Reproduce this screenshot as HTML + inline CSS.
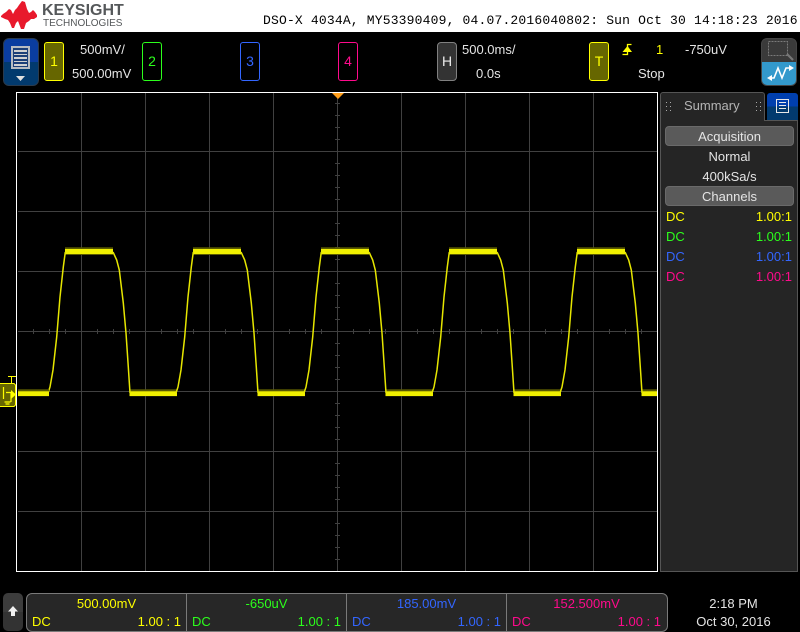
<!DOCTYPE html>
<html><head><meta charset="utf-8">
<style>
html,body{margin:0;padding:0;background:#000;}
#p{position:relative;width:800px;height:632px;overflow:hidden;background:#000;font-family:"Liberation Sans",sans-serif;font-size:13px;color:#e4e4e4;}
.t{position:absolute;white-space:nowrap;line-height:16px;}
.c{text-align:center;}
.r{text-align:right;}
.b{position:absolute;box-sizing:border-box;}
.n{font-size:14px;}
.y{color:#ffff00}.g{color:#2cff1c}.u{color:#3366ff}.k{color:#ff0a8c}
svg{position:absolute;left:0;top:0;}
</style></head><body>
<div id="p">
<div class="b" style="left:0;top:0;width:800px;height:32px;background:#fff;"></div>
<svg width="40" height="32" viewBox="0 0 40 32"><path d="M1 16L3 14L6 12L9 9L11 10L13 14L15 10L17 8L19 5L22 1L25 2L27 9L29 13L31 12L33 10L35 12L37 15L37 17L34 19L31 19L29 21L26 23L24 29L21 29L18 21L16 23L14 28L12 28L10 23L8 20L5 19L3 18L1 17Z" fill="#e8192c"/></svg>
<div class="t" style="left:42px;top:-3px;font-size:16px;line-height:24px;font-weight:bold;color:#55585a;transform:translateY(2px);">KEYSIGHT</div>
<div class="t" style="left:43px;top:15px;font-size:10px;line-height:14px;color:#55585a;transform:translateY(2px);">TECHNOLOGIES</div>
<div class="t" style="left:263px;top:13px;font-family:'Liberation Mono',monospace;font-size:13px;color:#000;letter-spacing:.18px;">DSO-X 4034A, MY53390409, 04.07.2016040802: Sun Oct 30 14:18:23 2016</div>

<div class="b" style="left:3px;top:38px;width:36px;height:48px;border-radius:6px;background:linear-gradient(#0a3da0 0,#0a3da0 50%,#023a6e 50%,#023a6e 100%);border:1px solid #2a3a4c;"></div>
<div class="b" style="left:11px;top:46px;width:19px;height:23px;background:#1c3f78;border:2px solid #b8bcc2;"></div>
<div class="b" style="left:14px;top:50px;width:13px;height:2px;background:#d0d0d0;"></div>
<div class="b" style="left:14px;top:54px;width:13px;height:1px;background:#d0d0d0;"></div>
<div class="b" style="left:14px;top:57px;width:13px;height:2px;background:#d0d0d0;"></div>
<div class="b" style="left:14px;top:61px;width:13px;height:1px;background:#d0d0d0;"></div>
<div class="b" style="left:14px;top:64px;width:13px;height:2px;background:#d0d0d0;"></div>
<svg width="40" height="90"><path d="M16 76H25L20.500 81Z" fill="#e0e0e0"/></svg>

<div class="b c y n" style="left:44px;top:42px;width:20px;height:39px;background:#666600;border:1px solid #ffff00;border-radius:3px;line-height:37px;">1</div>
<div class="b c g n" style="left:142px;top:42px;width:20px;height:39px;border:1px solid #2cff1c;border-radius:3px;line-height:37px;">2</div>
<div class="b c u n" style="left:240px;top:42px;width:20px;height:39px;border:1px solid #3366ff;border-radius:3px;line-height:37px;">3</div>
<div class="b c k n" style="left:338px;top:42px;width:20px;height:39px;border:1px solid #ff0a8c;border-radius:3px;line-height:37px;">4</div>
<div class="b c n" style="left:437px;top:42px;width:20px;height:39px;background:#333;border:1px solid #808080;border-radius:4px;line-height:37px;color:#eee;">H</div>
<div class="b c y n" style="left:589px;top:42px;width:20px;height:39px;background:#666600;border:1px solid #ffff00;border-radius:3px;line-height:37px;">T</div>

<div class="t" style="left:80px;top:42px;">500mV/</div>
<div class="t" style="left:72px;top:66px;">500.00mV</div>
<div class="t" style="left:462px;top:42px;">500.0ms/</div>
<div class="t" style="left:476px;top:66px;">0.0s</div>
<div class="t y" style="left:656px;top:42px;">1</div>
<div class="t" style="left:685px;top:42px;">-750uV</div>
<div class="t" style="left:638px;top:66px;">Stop</div>
<svg width="800" height="90"><path d="M622.500 54.500H627.500V44.500H631.500" fill="none" stroke="#ffff00" stroke-width="1.300"/><path d="M622.500 52L627.500 46L632 52Z" fill="#ffff00"/></svg>

<div class="b" style="left:761px;top:38px;width:36px;height:48px;border-radius:6px;background:linear-gradient(#3a3a3a 0,#3a3a3a 50%,#3399cc 50%,#3399cc 100%);border:1px solid #444;"></div>
<svg width="800" height="90" style="shape-rendering:crispEdges"><rect x="768.500" y="41.500" width="19" height="14" fill="none" stroke="#7a7a7a" stroke-dasharray="2 1"/></svg>
<svg width="800" height="90"><path d="M787 54L793 60" stroke="#777" stroke-width="2.200"/><path d="M770 78H774L778 68L782 78L786 68H790" fill="none" stroke="#fff" stroke-width="1.600"/><path d="M789 65L794 68L789 71Z" fill="#fff"/><path d="M772 75L767 78L772 81Z" fill="#fff"/></svg>

<!-- scope grid -->
<svg width="800" height="632" style="shape-rendering:crispEdges">
<g stroke="#404040" fill="none">
<path d="M81.500 93V571M145.500 93V571M209.500 93V571M273.500 93V571M337.500 93V571M401.500 93V571M465.500 93V571M529.500 93V571M593.500 93V571"/>
<path d="M18 151.500H657M18 211.500H657M18 271.500H657M18 331.500H657M18 391.500H657M18 451.500H657M18 511.500H657"/>
<path d="M33.500 329V334M49.500 329V334M65.500 329V334M97.500 329V334M113.500 329V334M129.500 329V334M161.500 329V334M177.500 329V334M193.500 329V334M225.500 329V334M241.500 329V334M257.500 329V334M289.500 329V334M305.500 329V334M321.500 329V334M353.500 329V334M369.500 329V334M385.500 329V334M417.500 329V334M433.500 329V334M449.500 329V334M481.500 329V334M497.500 329V334M513.500 329V334M545.500 329V334M561.500 329V334M577.500 329V334M609.500 329V334M625.500 329V334M641.500 329V334"/>
<path d="M335 103.500H340M335 115.500H340M335 127.500H340M335 139.500H340M335 163.500H340M335 175.500H340M335 187.500H340M335 199.500H340M335 223.500H340M335 235.500H340M335 247.500H340M335 259.500H340M335 283.500H340M335 295.500H340M335 307.500H340M335 319.500H340M335 343.500H340M335 355.500H340M335 367.500H340M335 379.500H340M335 403.500H340M335 415.500H340M335 427.500H340M335 439.500H340M335 463.500H340M335 475.500H340M335 487.500H340M335 499.500H340M335 523.500H340M335 535.500H340M335 547.500H340M335 559.500H340"/>
</g>
<rect x="16.500" y="92.500" width="641" height="479" fill="none" stroke="#fff" stroke-width="1.300"/>
</svg>

<!-- waveform -->
<svg width="800" height="632">
<defs>
<clipPath id="cp"><rect x="18" y="93" width="639" height="478"/></clipPath>
<g id="w">
<rect x="65" y="247.300" width="48" height="7.700" fill="#5a5a00"/>
<rect x="65" y="249" width="48" height="5" fill="#f0f000"/>
<rect x="129.500" y="389.300" width="47.500" height="7" fill="#5a5a00"/>
<rect x="129.500" y="391.300" width="47.500" height="4.700" fill="#f0f000"/>
<path d="M48 393L50 387L53 370L56.700 337L60 297L63.300 267L65.300 252M113 252L116.700 260L119.300 270L123.300 303L126 333L128.300 367L130 393" fill="none" stroke="#e6e600" stroke-width="1.500"/>
</g></defs>
<g clip-path="url(#cp)">
<use href="#w"/><use href="#w" x="128"/><use href="#w" x="256"/><use href="#w" x="384"/><use href="#w" x="512"/>
<rect x="18" y="389.300" width="31" height="7" fill="#5a5a00"/>
<rect x="18" y="391.300" width="31" height="4.700" fill="#f0f000"/>
</g>
<path d="M332 93H344L338 99Z" fill="#ff9e1a"/>
<path d="M8 376.500H16M11.500 376V383" stroke="#ffff00" fill="none"/>
<path d="M-1 383.500H14L15.500 385V405L14 406.500H-1Z" fill="#666600" stroke="#ffff00" stroke-width="1"/>
<path d="M3.500 387V399M6 392.500H11V402M4.500 402H10.500M5.500 404H9.500" stroke="#ffff00" stroke-width="1.200" fill="none"/>
<path d="M11 390L16 394.500L11 399Z" fill="#ffff00"/>
</svg>

<!-- side panel -->
<div class="b" style="left:660px;top:92px;width:105px;height:30px;background:#252525;border:1px solid #555;border-bottom:none;border-radius:3px 3px 0 0;"></div>
<div class="b" style="left:660px;top:120px;width:138px;height:452px;background:#252525;border:1px solid #555;"></div>
<div class="b" style="left:661px;top:119px;width:103px;height:4px;background:#252525;"></div>
<div class="b" style="left:767px;top:93px;width:31px;height:27px;border-radius:3px 3px 0 0;background:linear-gradient(#003fae 0,#003fae 50%,#023a6e 50%,#023a6e 100%);"></div>
<div class="b" style="left:776px;top:99px;width:13px;height:14px;border:1px solid #e8e8e8;"></div>
<div class="b" style="left:779px;top:102px;width:7px;height:1px;background:#e8e8e8;"></div>
<div class="b" style="left:779px;top:105px;width:7px;height:1px;background:#e8e8e8;"></div>
<div class="b" style="left:779px;top:108px;width:7px;height:1px;background:#e8e8e8;"></div>
<svg width="800" height="130" style="shape-rendering:crispEdges"><path d="M666 102.500h1M670 102.500h1M666 106.500h1M670 106.500h1M666 110.500h1M670 110.500h1M756 102.500h1M760 102.500h1M756 106.500h1M760 106.500h1M756 110.500h1M760 110.500h1" stroke="#aaa"/></svg>
<div class="t" style="left:684px;top:98px;color:#b4b4b4;">Summary</div>

<div class="b c" style="left:665px;top:126px;width:129px;height:20px;background:#5a5a5a;border:1px solid #6a6a6a;border-radius:4px;line-height:19px;">Acquisition</div>
<div class="t c" style="left:665px;top:149px;width:129px;">Normal</div>
<div class="t c" style="left:665px;top:169px;width:129px;">400kSa/s</div>
<div class="b c" style="left:665px;top:186px;width:129px;height:20px;background:#5a5a5a;border:1px solid #6a6a6a;border-radius:4px;line-height:19px;">Channels</div>
<div class="t y" style="left:666px;top:209px;">DC</div><div class="t r y" style="left:732px;top:209px;width:60px;">1.00:1</div>
<div class="t g" style="left:666px;top:229px;">DC</div><div class="t r g" style="left:732px;top:229px;width:60px;">1.00:1</div>
<div class="t u" style="left:666px;top:249px;">DC</div><div class="t r u" style="left:732px;top:249px;width:60px;">1.00:1</div>
<div class="t k" style="left:666px;top:269px;">DC</div><div class="t r k" style="left:732px;top:269px;width:60px;">1.00:1</div>

<!-- bottom -->
<div class="b" style="left:3px;top:593px;width:20px;height:38px;border-radius:5px;background:linear-gradient(#3c3c3c 0,#3c3c3c 50%,#333 50%,#333 100%);"></div>
<svg width="30" height="632"><path d="M13 606L18 611.500H15V616H11V611.500H8Z" fill="#f0f0f0"/></svg>
<div class="b" style="left:26px;top:593px;width:642px;height:39px;background:#272727;border:1px solid #7a7a7a;border-radius:6px;"></div>
<div class="b" style="left:186px;top:593px;width:1px;height:39px;background:#7a7a7a;"></div>
<div class="b" style="left:346px;top:593px;width:1px;height:39px;background:#7a7a7a;"></div>
<div class="b" style="left:506px;top:593px;width:1px;height:39px;background:#7a7a7a;"></div>

<div class="t c y" style="left:27px;top:596px;width:159px;">500.00mV</div>
<div class="t c g" style="left:187px;top:596px;width:159px;">-650uV</div>
<div class="t c u" style="left:347px;top:596px;width:159px;">185.00mV</div>
<div class="t c k" style="left:507px;top:596px;width:159px;">152.500mV</div>
<div class="t y" style="left:32px;top:614px;">DC</div><div class="t r y" style="left:100px;top:614px;width:81px;">1.00 : 1</div>
<div class="t g" style="left:192px;top:614px;">DC</div><div class="t r g" style="left:260px;top:614px;width:81px;">1.00 : 1</div>
<div class="t u" style="left:352px;top:614px;">DC</div><div class="t r u" style="left:420px;top:614px;width:81px;">1.00 : 1</div>
<div class="t k" style="left:512px;top:614px;">DC</div><div class="t r k" style="left:580px;top:614px;width:81px;">1.00 : 1</div>

<div class="t c" style="left:680px;top:596px;width:107px;">2:18 PM</div>
<div class="t c" style="left:680px;top:614px;width:107px;">Oct 30, 2016</div>
</div>
</body></html>
